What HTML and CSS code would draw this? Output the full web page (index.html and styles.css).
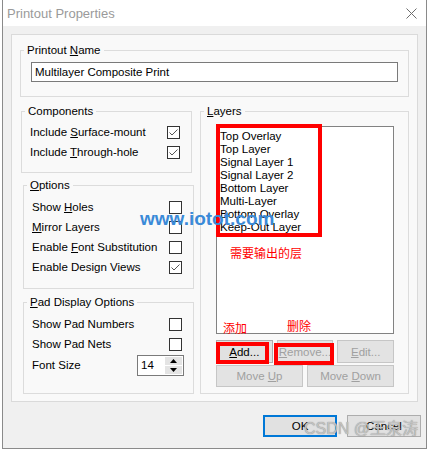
FILE: index.html
```html
<!DOCTYPE html>
<html>
<head>
<meta charset="utf-8">
<link rel="stylesheet" href="styles.css">
</head>
<body>
<div class="window">
  <div class="titlebar">
    <span class="title">Printout Properties</span>
    <svg class="close" width="11" height="11" viewBox="0 0 11 11"><path d="M0.5 0.5 L10.5 10.5 M10.5 0.5 L0.5 10.5" stroke="#6d6d6d" stroke-width="1" fill="none"/></svg>
  </div>
  <div class="client">
    <div class="panel">
      <div class="group group-name">
        <div class="legend">Printout <u>N</u>ame</div>
        <div class="name-body"><div class="textbox">Multilayer Composite Print</div></div>
      </div>
      <div class="columns">
        <div class="col-left">
          <div class="group comp">
            <div class="legend">Components</div>
            <div class="rows comp-rows">
              <div class="row"><span>Include <u>S</u>urface-mount</span><span class="check on"><svg width="11" height="11" viewBox="0 0 11 11"><path d="M1.5 5.5 L4 8 L9.5 2.5" stroke="#555" stroke-width="1" fill="none"/></svg></span></div>
              <div class="row"><span>Include <u>T</u>hrough-hole</span><span class="check on"><svg width="11" height="11" viewBox="0 0 11 11"><path d="M1.5 5.5 L4 8 L9.5 2.5" stroke="#555" stroke-width="1" fill="none"/></svg></span></div>
            </div>
          </div>
          <div class="group opts">
            <div class="legend"><u>O</u>ptions</div>
            <div class="rows opt-rows">
              <div class="row"><span>Show <u>H</u>oles</span><span class="check"></span></div>
              <div class="row"><span><u>M</u>irror Layers</span><span class="check"></span></div>
              <div class="row"><span>Enable <u>F</u>ont Substitution</span><span class="check"></span></div>
              <div class="row"><span>Enable Design Views</span><span class="check on"><svg width="11" height="11" viewBox="0 0 11 11"><path d="M1.5 5.5 L4 8 L9.5 2.5" stroke="#555" stroke-width="1" fill="none"/></svg></span></div>
            </div>
          </div>
          <div class="group pad">
            <div class="legend"><u>P</u>ad Display Options</div>
            <div class="rows pad-rows">
              <div class="row"><span>Show Pad Numbers</span><span class="check"></span></div>
              <div class="row"><span>Show Pad Nets</span><span class="check"></span></div>
              <div class="row row-tall"><span>Font Size</span>
                <span class="spin"><span class="spin-val">14</span>
                  <span class="spin-btns">
                    <span class="spin-btn"><svg width="7" height="4" viewBox="0 0 7 4"><path d="M0 4 L3.5 0 L7 4 Z" fill="#000"/></svg></span>
                    <span class="spin-btn"><svg width="7" height="4" viewBox="0 0 7 4"><path d="M0 0 L7 0 L3.5 4 Z" fill="#000"/></svg></span>
                  </span>
                </span>
              </div>
            </div>
          </div>
        </div>
        <div class="group layers">
          <div class="legend"><u>L</u>ayers</div>
          <div class="layers-body">
            <div class="listbox">
              <div class="item">Top Overlay</div>
              <div class="item">Top Layer</div>
              <div class="item">Signal Layer 1</div>
              <div class="item">Signal Layer 2</div>
              <div class="item">Bottom Layer</div>
              <div class="item">Multi-Layer</div>
              <div class="item">Bottom Overlay</div>
              <div class="item">Keep-Out Layer</div>
            </div>
            <div class="btn-row three">
              <div class="btn"><span><u>A</u>dd...</span></div>
              <div class="btn disabled"><span><u>R</u>emove...</span></div>
              <div class="btn disabled"><span><u>E</u>dit...</span></div>
            </div>
            <div class="btn-row two">
              <div class="btn disabled"><span>Move <u>U</u>p</span></div>
              <div class="btn disabled"><span>Move <u>D</u>own</span></div>
            </div>
          </div>
        </div>
      </div>
    </div>
    <div class="dialog-buttons">
      <div class="btn dlg default"><span>OK</span></div>
      <div class="btn dlg"><span>Cancel</span></div>
    </div>
  </div>
</div>

<div class="mark box-layers"></div>
<div class="mark box-add"></div>
<div class="mark box-remove"></div>
<div class="note note-layers">需要输出的层</div>
<div class="note note-add">添加</div>
<div class="note note-remove">删除</div>
<div class="wm-site">www.iotot.com</div>
<div class="wm-csdn">CSDN @王泉涛</div>
</body>
</html>
```
FILE: styles.css
```css
* { box-sizing: border-box; }

body {
  margin: 0;
  width: 429px;
  height: 450px;
  overflow: hidden;
  position: relative;
  background: #ffffff;
  font-family: "Liberation Sans", Arial, sans-serif;
  font-size: 11.5px;
  color: #000;
}

u { text-decoration: underline; text-underline-offset: 1px; }

.window {
  margin-left: 2px;
  width: 425px;
  height: 449px;
  border: 1px solid #8a8a8a;
  border-top: none;
  background: #f0f0f0;
  display: flex;
  flex-direction: column;
}

.titlebar {
  flex: none;
  height: 26px;
  background: #ffffff;
  display: flex;
  align-items: center;
  justify-content: space-between;
  padding: 0 9px 0 4px;
}

.title { font-size: 13px; color: #9a9a9a; }

.close { display: block; }

.client {
  flex: 1;
  display: flex;
  flex-direction: column;
  padding-top: 8px;
}

.panel {
  flex: none;
  margin: 0 8px;
  height: 368px;
  border: 1px solid #dadada;
  background: #f9f9f9;
  padding: 15px 8px 7px 8px;
}

.group {
  border: 1px solid #dcdcdc;
}

.legend {
  margin: -8px 0 0 3px;
  padding: 0 3px;
  width: fit-content;
  height: 14px;
  line-height: 14px;
  background: #f9f9f9;
  white-space: nowrap;
}

.name-body { padding: 5px 10px 14px 10px; }

.textbox {
  height: 20px;
  border: 1px solid #7a7a7a;
  background: #ffffff;
  padding-left: 3px;
  line-height: 18px;
}

.columns {
  margin-top: 14px;
  display: flex;
  align-items: flex-start;
  gap: 6px;
}

.col-left {
  width: 174px;
  display: flex;
  flex-direction: column;
}

.comp { margin-left: 1px; width: 171px; }
.opts { margin-left: 3px; width: 171px; margin-top: 12px; }
.pad { margin-left: 3px; width: 171px; margin-top: 13px; }

.rows { padding-left: 8px; padding-right: 11px; }
.comp-rows { padding-top: 4px; padding-bottom: 10px; }
.opt-rows { padding-top: 5px; padding-bottom: 11px; }
.pad-rows { padding-top: 5px; padding-bottom: 17px; }

.row {
  height: 20px;
  display: flex;
  align-items: center;
  justify-content: space-between;
  white-space: nowrap;
}

.row-tall { height: 22px; }

.check {
  width: 13px;
  height: 13px;
  border: 1px solid #333333;
  background: #ffffff;
  display: flex;
  align-items: center;
  justify-content: center;
}

.check svg { display: block; }

.spin {
  width: 47px;
  height: 21px;
  margin-right: -2px;
  border: 1px solid #7a7a7a;
  background: #ffffff;
  display: flex;
  align-items: center;
  justify-content: space-between;
  padding: 1px 1px 1px 3px;
}

.spin-val { line-height: 17px; }

.spin-btns {
  width: 17px;
  height: 100%;
  display: flex;
  flex-direction: column;
  gap: 1px;
}

.spin-btn {
  flex: 1;
  background: #e4e4e4;
  display: flex;
  align-items: center;
  justify-content: center;
}

.spin-btn svg { display: block; }

.layers { width: 209px; height: 283px; }

.layers-body { padding: 8px 14px 0 15px; }

.listbox {
  height: 208px;
  border: 1px solid #828282;
  background: #ffffff;
  padding: 3px 0 0 3px;
}

.item { line-height: 13px; height: 13px; white-space: nowrap; }

.btn-row { display: grid; gap: 4px; }
.btn-row.three { grid-template-columns: 1fr 1fr 1fr; margin-top: 6px; }
.btn-row.three .btn { height: 23px; }
.btn-row.two { grid-template-columns: 1fr 1fr; margin-top: 2px; }
.btn-row.two .btn { height: 22px; }

.btn {
  border: 1px solid #adadad;
  background: #e1e1e1;
  display: flex;
  align-items: center;
  justify-content: center;
  white-space: nowrap;
}

.btn.disabled {
  border-color: #c6c6c6;
  background: #e3e3e3;
  color: #a0a0a0;
}

.dialog-buttons {
  margin-top: 13px;
  display: flex;
  justify-content: flex-end;
  gap: 10px;
  padding-right: 5px;
}

.btn.dlg { width: 74px; height: 22px; }

.btn.default { border: 2px solid #0078d7; }

/* annotation overlays */
.mark {
  position: absolute;
  border: 4px solid #ff0000;
}
.box-layers { left: 216px; top: 124px; width: 106px; height: 113px; }
.box-add { left: 216px; top: 342px; width: 53px; height: 22px; }
.box-remove { left: 274px; top: 343px; width: 60px; height: 22px; }

.note {
  position: absolute;
  color: #ff0000;
  font-family: "Noto Sans CJK SC", sans-serif;
  font-size: 12px;
  line-height: 14px;
  white-space: nowrap;
}
.note-layers { left: 230px; top: 246px; }
.note-add { left: 223px; top: 321px; }
.note-remove { left: 287px; top: 319px; }

.wm-site {
  position: absolute;
  left: 140px;
  top: 209px;
  font-family: "Liberation Sans", Arial, sans-serif;
  font-weight: bold;
  font-size: 19px;
  line-height: 19px;
  color: #3a8ad8;
  white-space: nowrap;
}

.wm-csdn {
  position: absolute;
  left: 304px;
  top: 419px;
  font-family: "Liberation Sans", "Noto Sans CJK SC", sans-serif;
  font-size: 16px;
  line-height: 20px;
  color: rgba(205, 205, 205, 0.85);
  text-shadow: 0 0 1px #777;
  white-space: nowrap;
}
```
